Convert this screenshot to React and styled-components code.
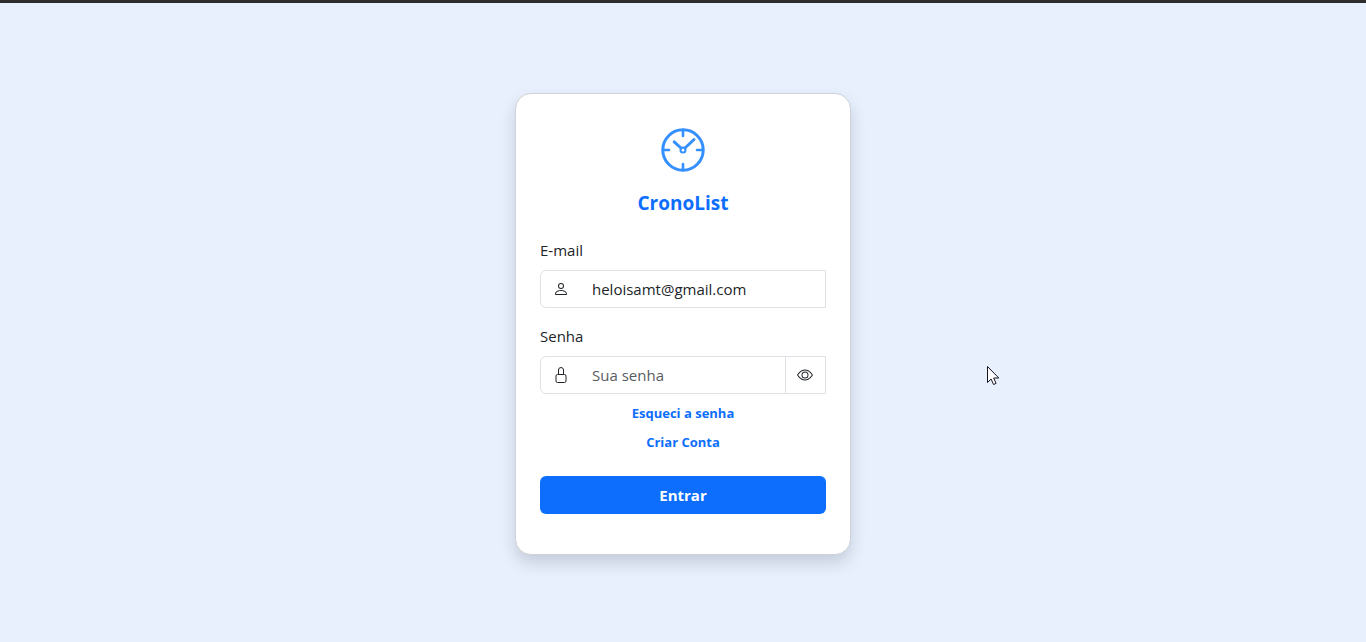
import React, { useState } from "react";
import styled, { createGlobalStyle } from "styled-components";
import { BsPerson, BsEye } from "react-icons/bs";

const GlobalStyle = createGlobalStyle`
  *, *::before, *::after { box-sizing: border-box; }
  body {
    margin: 0;
    background: #e8f0fe;
    color: #212529;
    font-family: "Segoe UI", "Open Sans", "Noto Sans", sans-serif;
    font-size: 15px;
    line-height: 24px;
  }
`;

const Page = styled.div`
  min-height: 100vh;
  display: flex;
  flex-direction: column;
  border-top: 3px solid #2d2d2d;
`;

const Main = styled.main`
  flex: 1;
  display: flex;
  align-items: center;
  justify-content: center;
  padding: 2px 16px 0;
`;

const Card = styled.form`
  width: 100%;
  max-width: 336px;
  padding: 24px 24px 40px;
  display: flex;
  flex-direction: column;
  background: #fff;
  border: 1px solid #cfd2d8;
  border-radius: 16px;
  box-shadow: 0 8px 16px rgba(0, 0, 0, 0.15);
`;

const Brand = styled.header`
  display: flex;
  flex-direction: column;
  align-items: center;
  gap: 16px;
  padding: 8px 0 22px;
`;

const Title = styled.h1`
  margin: 0;
  color: #0d6efd;
  font-size: 19px;
  font-weight: 700;
  line-height: 26px;
`;

const Field = styled.div`
  display: flex;
  flex-direction: column;
  gap: 8px;
  margin-bottom: ${({ $last }) => ($last ? "9px" : "16px")};
`;

const InputGroup = styled.div`
  display: flex;
  height: 38px;
  border: 1px solid #dee2e6;
  border-radius: 6px 0 0 6px;
`;

const Addon = styled.span`
  display: flex;
  align-items: center;
  padding: 0 12px;
`;

const TextInput = styled.input`
  flex: 1;
  min-width: 0;
  padding: 0 12px 0 11px;
  border: 0;
  outline: 0;
  background: transparent;
  color: #212529;
  font: inherit;
  &::placeholder { color: #595c5f; opacity: 1; }
`;

const Toggle = styled.button`
  display: flex;
  align-items: center;
  padding: 0 12px 0 11px;
  border: 0;
  border-left: 1px solid #dee2e6;
  background: transparent;
  color: #212529;
  cursor: pointer;
`;

const Links = styled.nav`
  display: flex;
  flex-direction: column;
  align-items: center;
  gap: 9px;
  margin-bottom: 24px;
`;

const TextLink = styled.a`
  color: #0d6efd;
  font-size: 13px;
  font-weight: 700;
  line-height: 20px;
  text-decoration: none;
`;

const Submit = styled.button`
  height: 38px;
  border: 0;
  border-radius: 6px;
  background: #0d6efd;
  color: #fff;
  font: inherit;
  font-weight: 700;
  cursor: pointer;
`;

const Pointer = styled.svg`
  position: absolute;
  left: calc(50% + 304px);
  top: 366px;
  pointer-events: none;
`;

function ClockLogo() {
  return (
    <svg width="48" height="48" viewBox="0 0 48 48" fill="none" stroke="#3590ff" strokeWidth="3" aria-hidden="true">
      <circle cx="24" cy="24" r="20.2" />
      <path d="M24 4v6M24 38v6M4 24h6M38 24h6" strokeWidth="2.6" strokeLinecap="round" />
      <path d="M22 22l-6.8-6.2M26 22l9-8.5" strokeLinecap="round" />
      <circle cx="24" cy="24" r="2.5" strokeWidth="2" />
    </svg>
  );
}

function LockIcon() {
  return (
    <svg width="16" height="16" viewBox="0 0 16 16" fill="none" stroke="currentColor" aria-hidden="true">
      <rect x="3" y="7.5" width="10" height="8" rx="1.5" />
      <path d="M5.5 7.5V3a2.5 2.5 0 0 1 5 0v4.5" />
    </svg>
  );
}

export default function App() {
  const [visible, setVisible] = useState(false);
  return (
    <>
      <GlobalStyle />
      <Page>
        <Main>
          <Card onSubmit={(e) => e.preventDefault()}>
            <Brand>
              <ClockLogo />
              <Title>CronoList</Title>
            </Brand>
            <Field>
              <label htmlFor="email">E-mail</label>
              <InputGroup>
                <Addon><BsPerson size={16} /></Addon>
                <TextInput id="email" type="email" defaultValue="heloisamt@gmail.com" />
              </InputGroup>
            </Field>
            <Field $last>
              <label htmlFor="senha">Senha</label>
              <InputGroup>
                <Addon><LockIcon /></Addon>
                <TextInput id="senha" type={visible ? "text" : "password"} placeholder="Sua senha" />
                <Toggle type="button" aria-label="Mostrar senha" onClick={() => setVisible(!visible)}>
                  <BsEye size={16} />
                </Toggle>
              </InputGroup>
            </Field>
            <Links>
              <TextLink href="#esqueci">Esqueci a senha</TextLink>
              <TextLink href="#criar">Criar Conta</TextLink>
            </Links>
            <Submit type="submit">Entrar</Submit>
          </Card>
        </Main>
      </Page>
      <Pointer width="13" height="20" viewBox="0 0 13 20" aria-hidden="true">
        <path d="M.5.5v16l3.6-3.5 2.4 5.5 2.6-1.1-2.4-5.4h5.1z" fill="#fff" stroke="#15151f" />
      </Pointer>
    </>
  );
}
